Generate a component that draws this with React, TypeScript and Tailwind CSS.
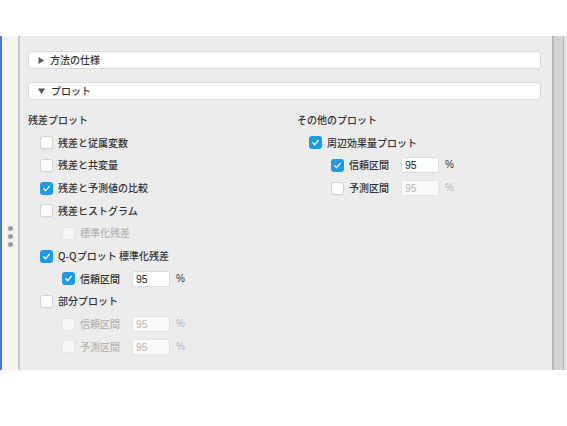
import React from "react";

const FONT = { fontFamily: '"Noto Sans CJK JP", "Noto Sans", sans-serif' };

function Box({ state }: { state: "on" | "off" | "dis" }) {
  if (state === "on") {
    return (
      <span className="flex h-[13px] w-[13px] shrink-0 items-center justify-center rounded-[3px] bg-[#1d9be6]">
        <svg width="9" height="9" viewBox="0 0 9 9">
          <path d="M1.8 4.8 L3.7 6.7 L7.3 2.3" fill="none" stroke="white" strokeWidth="1.3" strokeLinecap="round" strokeLinejoin="round" />
        </svg>
      </span>
    );
  }
  if (state === "dis") {
    return <span className="h-[13px] w-[13px] shrink-0 rounded-[3px] border border-[#e6e6e6] bg-[#f7f7f7]" />;
  }
  return <span className="h-[13px] w-[13px] shrink-0 rounded-[3px] border border-[#d4d4d4] bg-white shadow-[0_0.5px_0.5px_rgba(0,0,0,0.08)]" />;
}

function Row({ indent, state, label, header }: { indent?: string; state?: "on" | "off" | "dis"; label: string; header?: boolean }) {
  const dis = state === "dis";
  return (
    <div className={`flex h-[22.7px] items-center ${indent ?? ""}`}>
      {!header && <Box state={state!} />}
      <span className={`${header ? "" : "ml-[5px]"} text-[10px] font-medium leading-none ${dis ? "text-[#b5b5b5]" : "text-[#333]"}`}>{label}</span>
    </div>
  );
}

function CIRow({ state, label, value }: { state: "on" | "off" | "dis"; label: string; value: string }) {
  const dis = state !== "on";
  return (
    <div className="flex h-[22.7px] items-center pl-[34px]">
      <Box state={state} />
      <span className={`ml-[5px] w-[52px] text-[10px] font-medium leading-none ${state === "dis" ? "text-[#b5b5b5]" : "text-[#333]"}`}>{label}</span>
      <span className={`flex h-[16px] w-[38px] items-center rounded-[2px] border pl-[3px] text-[10.5px] leading-none ${dis ? "border-[#e4e4e4] bg-[#fafafa] text-[#b8b8b8]" : "border-[#dcdcdc] bg-white font-medium text-[#222]"}`} style={{ fontFamily: '"Liberation Sans", sans-serif' }}>{value}</span>
      <span className={`ml-[6px] text-[10px] leading-none ${dis ? "text-[#b8b8b8]" : "font-medium text-[#333]"}`} style={{ fontFamily: '"Liberation Sans", sans-serif' }}>%</span>
    </div>
  );
}

function Section({ open, label }: { open: boolean; label: string }) {
  return (
    <div className="flex h-[18px] items-center rounded-[4px] border border-[#d9d9d9] bg-white pl-[9px]">
      {open ? (
        <svg width="7" height="6" viewBox="0 0 7 6"><path d="M0 0.5 H7 L3.5 6 Z" fill="#555" /></svg>
      ) : (
        <svg width="6" height="7" viewBox="0 0 6 7"><path d="M0.5 0 V7 L6 3.5 Z" fill="#555" /></svg>
      )}
      <span className="ml-[6px] text-[10px] font-medium leading-none text-[#333]">{label}</span>
    </div>
  );
}

export default function App() {
  return (
    <div className="h-[426px] w-[567px] bg-white" style={FONT}>
      <div className="h-[36px]" />
      <div className="flex h-[334px]">
        <div className="w-[2px] bg-[#3f7fd6]" />
        <div className="flex w-[16px] flex-col items-center justify-center gap-[3px] bg-[#f6f2f0] pt-[66px]">
          <span className="h-[5px] w-[5px] rounded-full bg-[#9c9c9c]" />
          <span className="h-[5px] w-[5px] rounded-full bg-[#9c9c9c]" />
          <span className="h-[5px] w-[5px] rounded-full bg-[#9c9c9c]" />
        </div>
        <div className="w-[2px] bg-[#c9c9c9]" />
        <div className="flex flex-1 flex-col bg-[#ececec] pl-[8px] pr-[11px] pt-[15px]">
          <Section open={false} label="方法の仕様" />
          <div className="h-[13px]" />
          <Section open={true} label="プロット" />
          <div className="flex pt-[8.6px]">
            <div className="w-[269px]">
              <Row header label="残差プロット" />
              <Row indent="pl-[12px]" state="off" label="残差と従属変数" />
              <Row indent="pl-[12px]" state="off" label="残差と共変量" />
              <Row indent="pl-[12px]" state="on" label="残差と予測値の比較" />
              <Row indent="pl-[12px]" state="off" label="残差ヒストグラム" />
              <Row indent="pl-[34px]" state="dis" label="標準化残差" />
              <Row indent="pl-[12px]" state="on" label="Q-Qプロット 標準化残差" />
              <CIRow state="on" label="信頼区間" value="95" />
              <Row indent="pl-[12px]" state="off" label="部分プロット" />
              <CIRow state="dis" label="信頼区間" value="95" />
              <CIRow state="dis" label="予測区間" value="95" />
            </div>
            <div className="flex-1">
              <Row header label="その他のプロット" />
              <Row indent="pl-[12px]" state="on" label="周辺効果量プロット" />
              <CIRow state="on" label="信頼区間" value="95" />
              <CIRow state="off" label="予測区間" value="95" />
            </div>
          </div>
        </div>
        <div className="flex w-[15px]">
          <div className="w-[2px] bg-[#b9b9b9]" />
          <div className="w-[9px] bg-[#d4d4d4]" />
          <div className="w-[1px] bg-[#b4b4b4]" />
          <div className="w-[3px] bg-[#e2e2e2]" />
        </div>
      </div>
    </div>
  );
}
